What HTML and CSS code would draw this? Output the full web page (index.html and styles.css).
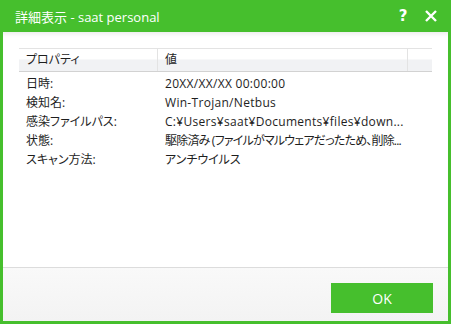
FILE: index.html
```html
<!DOCTYPE html>
<html lang="ja">
<head>
    <meta charset="UTF-8">
    <title>詳細表示 - saat personal</title>
    <link rel="stylesheet" href="styles.css">
</head>
<body>
    <div class="window">
        <div class="titlebar">
            <span class="title">詳細表示 - saat personal</span>
            <span class="tb-btn help">?</span>
            <span class="tb-btn close">
                <svg width="14" height="14" viewBox="0 0 14 14">
                    <path d="M2 2 L12 12 M12 2 L2 12" stroke="#fff" stroke-width="2.4" fill="none"/>
                </svg>
            </span>
        </div>
        <div class="content">
            <div class="list">
                <div class="list-header">
                    <div class="col col-prop">プロパティ</div>
                    <div class="col col-val">値</div>
                    <div class="col col-fill"></div>
                </div>
                <div class="row"><div class="col col-prop">日時:</div><div class="col col-val latin">20XX/XX/XX 00:00:00</div></div>
                <div class="row"><div class="col col-prop">検知名:</div><div class="col col-val latin">Win-Trojan/Netbus</div></div>
                <div class="row"><div class="col col-prop">感染ファイルパス:</div><div class="col col-val latin">C:¥Users¥saat¥Documents¥files¥down...</div></div>
                <div class="row"><div class="col col-prop">状態:</div><div class="col col-val tight">駆除済み (ファイルがマルウェアだったため、削除...</div></div>
                <div class="row"><div class="col col-prop">スキャン方法:</div><div class="col col-val">アンチウイルス</div></div>
            </div>
        </div>
        <div class="footer">
            <button type="button" class="ok-btn">OK</button>
        </div>
    </div>
</body>
</html>
```

FILE: styles.css
```css
body {
    margin: 0;
    font-family: "Open Sans", "Noto Sans CJK JP", sans-serif;
    font-feature-settings: "palt";
}
.window {
    width: 451px;
    height: 324px;
    box-sizing: border-box;
    background-color: #46bf2d;
    padding: 0 3px 3px 3px;
    display: flex;
    flex-direction: column;
}
.titlebar {
    height: 32px;
    display: flex;
    align-items: center;
    color: #fff;
    padding-left: 12px;
}
.title {
    flex: 1;
    font-size: 13px;
}
.tb-btn {
    width: 28px;
    display: flex;
    justify-content: center;
    align-items: center;
}
.help {
    font-family: "DejaVu Sans", sans-serif;
    font-weight: bold;
    font-size: 15px;
}
.close {
    margin-right: 3px;
}
.content {
    flex: 1;
    background-color: #fff;
    box-shadow: inset 0 5px 4px -3px rgba(0, 0, 0, 0.08);
    padding: 16px 16px 0 16px;
}
.list {
    font-size: 12px;
    color: #1e1e1e;
}
.list-header {
    display: flex;
    height: 22px;
    border-top: 1px solid #e3e3e3;
    border-bottom: 1px solid #d2d2d2;
    background: linear-gradient(#fff 0%, #fff 45%, #f1f2f4 50%, #f1f2f4 100%);
}
.list-header .col {
    border-right: 1px solid #e3e3e3;
    line-height: 22px;
}
.list-header .col-fill {
    flex: 1;
    border-right: none;
}
.col {
    box-sizing: border-box;
    padding-left: 7px;
    white-space: nowrap;
}
.col-prop {
    width: 139px;
}
.col-val {
    width: 250px;
}
.latin {
    letter-spacing: 0.3px;
}
.tight {
    letter-spacing: -0.8px;
}
.row {
    display: flex;
    height: 19px;
    line-height: 19px;
}
.list-header + .row {
    margin-top: 2px;
}
.footer {
    height: 54px;
    border-top: 1px solid #dcdcdc;
    background: linear-gradient(#f9f9f9, #f3f3f3);
    display: flex;
    justify-content: flex-end;
    align-items: flex-start;
    padding: 15px 15px 0 0;
    box-sizing: border-box;
}
.ok-btn {
    width: 102px;
    height: 30px;
    border: none;
    background-color: #46bf2d;
    color: #fff;
    font-family: "Open Sans", sans-serif;
    font-size: 14px;
    padding: 0;
    cursor: pointer;
}
```
